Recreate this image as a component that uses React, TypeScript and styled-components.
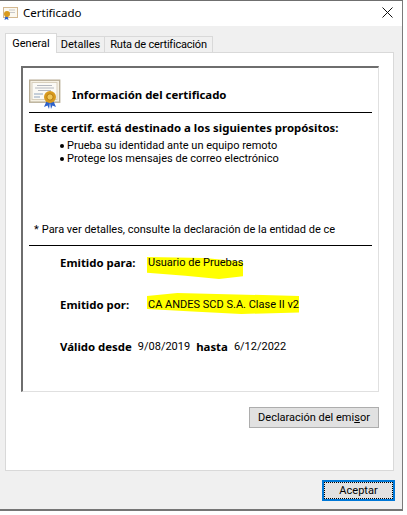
import styled, { createGlobalStyle } from "styled-components";

const GlobalStyle = createGlobalStyle`
  html, body {
    margin: 0;
    padding: 0;
    background: #ffffff;
  }
  body {
    font-family: Roboto, "Noto Sans", sans-serif;
    font-size: 11px;
    color: #000000;
  }
  b {
    font-family: "Noto Sans", sans-serif;
    font-size: 11.4px;
    font-weight: 700;
  }
`;

const Page = styled.div`
  width: 407px;
  height: 515px;
  overflow: hidden;
`;

const Dialog = styled.div`
  width: 402px;
  height: 508px;
  background: #f0f0f0;
  border-top: 1px solid #6f6f6f;
  border-right: 1px solid #7a7a7a;
  border-bottom: 2px solid #757575;
  display: flex;
  flex-direction: column;
`;

const TitleBar = styled.div`
  height: 25px;
  box-sizing: border-box;
  flex: none;
  background: #ffffff;
  display: flex;
  align-items: center;
  padding: 0 9px 2px 3px;
  gap: 5px;
`;

const Title = styled.span`
  font-family: "Noto Sans", sans-serif;
  font-size: 11.5px;
  flex: 1;
`;

const Content = styled.div`
  flex: 1;
  display: flex;
  flex-direction: column;
  padding: 7px 8px 0 5px;
`;

const TabRow = styled.div`
  display: flex;
  align-items: flex-end;
  height: 20px;
  position: relative;
  z-index: 1;
  margin-bottom: -1px;
`;

const Tab = styled.div<{ $active?: boolean; $width: number }>`
  width: ${(p) => p.$width}px;
  height: ${(p) => (p.$active ? 20 : 17)}px;
  box-sizing: border-box;
  background: ${(p) => (p.$active ? "#ffffff" : "#f0f0f0")};
  border: 1px solid #d9d9d9;
  border-bottom: ${(p) => (p.$active ? "none" : "1px solid #d9d9d9")};
  border-left: ${(p) => (p.$active ? "1px solid #d9d9d9" : "none")};
  display: flex;
  align-items: center;
  justify-content: center;
  white-space: nowrap;
  letter-spacing: ${(p) => (p.$width > 100 ? "-0.2px" : "0")};
`;

const Panel = styled.div`
  height: 419px;
  box-sizing: border-box;
  background: #ffffff;
  border: 1px solid #d9d9d9;
  padding: 13px 14px 0 15px;
`;

const Frame = styled.div`
  height: 326px;
  box-sizing: border-box;
  border-top: 2px solid #6e6e6e;
  border-left: 2px solid #6e6e6e;
  border-right: 1px solid #e0e0e0;
  border-bottom: 1px solid #e0e0e0;
  padding: 0 6px 0 6px;
`;

const InfoHeader = styled.div`
  height: 45px;
  box-sizing: border-box;
  border-bottom: 1px solid #000000;
  display: flex;
  align-items: center;
  gap: 11px;
  padding-top: 9px;
`;

const Purposes = styled.div`
  height: 133px;
  box-sizing: border-box;
  border-bottom: 1px solid #000000;
  padding: 8px 0 0 5px;
  display: flex;
  flex-direction: column;
`;

const PurposeTitle = styled.b`
  line-height: 13px;
  margin-bottom: 5px;
`;

const Purpose = styled.div`
  line-height: 13px;
  padding-left: 26px;
  display: flex;
  align-items: center;
  gap: 3px;
`;

const Bullet = styled.span`
  width: 4px;
  height: 4px;
  border-radius: 50%;
  background: #000000;
`;

const Footnote = styled.div`
  margin-top: auto;
  margin-bottom: 9px;
  line-height: 13px;
  white-space: nowrap;
  display: flex;
  gap: 3px;
`;

const Details = styled.div`
  padding: 10px 0 0 31px;
  display: flex;
  flex-direction: column;
  gap: 29px;
`;

const DetailRow = styled.div`
  display: grid;
  grid-template-columns: 88px auto;
  line-height: 13px;
`;

const Marked = styled.span<{ $width: number; $height: number; $top: number; $clip: string }>`
  position: relative;
  z-index: 0;
  justify-self: start;
  white-space: nowrap;

  &::before {
    content: "";
    position: absolute;
    z-index: -1;
    left: -1px;
    top: ${(p) => p.$top}px;
    width: ${(p) => p.$width}px;
    height: ${(p) => p.$height}px;
    background: #ffff00;
    clip-path: polygon(${(p) => p.$clip});
  }
`;

const ValidRow = styled.div`
  display: flex;
  line-height: 13px;
  gap: 6px;
`;

const ButtonRow = styled.div`
  display: flex;
  justify-content: flex-end;
  padding: 15px 0 0 0;
`;

const StatementButton = styled.button`
  width: 130px;
  height: 21px;
  padding: 0;
  background: #e1e1e1;
  border: 1px solid #adadad;
  font: inherit;
  color: #000000;
`;

const Footer = styled.div`
  display: flex;
  justify-content: flex-end;
  padding-top: 9px;
  margin-right: -1px;
`;

const OkButton = styled.button`
  width: 73px;
  height: 21px;
  padding: 0;
  background: #e1e1e1;
  border: 2px solid #0078d7;
  outline: 1px dotted #000000;
  outline-offset: -3px;
  font: inherit;
  color: #000000;
`;

function CertIcon() {
  return (
    <svg width="32" height="32" viewBox="0 0 32 32">
      <rect x="0.7" y="1.2" width="30" height="22" fill="#f6f1e4" stroke="#b9ae97" strokeWidth="1.4" />
      <rect x="3" y="3.5" width="25" height="17" fill="#fbfaf5" stroke="#d8d0bd" />
      <path d="M8 6.5h15M6 9h19M9 11.5h13" stroke="#b4b8bf" strokeWidth="1" />
      <path d="M5 15h9M5 18h6" stroke="#8fa3bd" strokeWidth="1.2" />
      <path d="M18 21l-3 7 3.5-1.5L20 30l1-6z M24 21l3 7-3.5-1.5L22 30l-1-6z" fill="#2f62c9" />
      <circle cx="21" cy="18" r="6" fill="#d89a1e" />
      <circle cx="21" cy="18" r="3.2" fill="#f1c75a" stroke="#b67c10" />
    </svg>
  );
}

function TitleIcon() {
  return (
    <svg width="15" height="16" viewBox="0 0 15 16">
      <rect x="0.5" y="2.5" width="14" height="10" fill="#fbf8f0" stroke="#d3b890" />
      <path d="M6 5h6M6 7.5h6" stroke="#c9c9c9" strokeWidth="1" />
      <path d="M2.5 11l-1 4 2-1 2 1-1-4z" fill="#2f62c9" />
      <circle cx="4" cy="9" r="3" fill="#d89a1e" />
    </svg>
  );
}

function CloseIcon() {
  return (
    <svg width="11" height="11" viewBox="0 0 11 11">
      <path d="M0.5 0.5l10 10M10.5 0.5l-10 10" stroke="#111111" strokeWidth="1" fill="none" />
    </svg>
  );
}

export default function App() {
  return (
    <Page>
      <GlobalStyle />
      <Dialog>
        <TitleBar>
          <TitleIcon />
          <Title>Certificado</Title>
          <CloseIcon />
        </TitleBar>
        <Content>
          <TabRow>
            <Tab $active $width={52}>General</Tab>
            <Tab $width={48}>Detalles</Tab>
            <Tab $width={108}>Ruta de certificación</Tab>
          </TabRow>
          <Panel>
            <Frame>
              <InfoHeader>
                <CertIcon />
                <b>Información del certificado</b>
              </InfoHeader>
              <Purposes>
                <PurposeTitle>Este certif. está destinado a los siguientes propósitos:</PurposeTitle>
                <Purpose><Bullet />Prueba su identidad ante un equipo remoto</Purpose>
                <Purpose><Bullet />Protege los mensajes de correo electrónico</Purpose>
                <Footnote><span>*</span>Para ver detalles, consulte la declaración de la entidad de ce</Footnote>
              </Purposes>
              <Details>
                <DetailRow>
                  <b>Emitido para:</b>
                  <Marked $width={96} $height={22} $top={1} $clip="0 0, 60% 5%, 100% 22%, 100% 88%, 75% 100%, 40% 85%, 0 72%">Usuario de Pruebas</Marked>
                </DetailRow>
                <DetailRow>
                  <b>Emitido por:</b>
                  <Marked $width={152} $height={21} $top={-5} $clip="0 14%, 20% 0, 100% 14%, 100% 93%, 62% 100%, 30% 88%, 0 76%">CA ANDES SCD S.A. Clase II v2</Marked>
                </DetailRow>
                <ValidRow>
                  <b>Válido desde</b>
                  <span>9/08/2019</span>
                  <b>hasta</b>
                  <span>6/12/2022</span>
                </ValidRow>
              </Details>
            </Frame>
            <ButtonRow>
              <StatementButton>Declaración del emi<u>s</u>or</StatementButton>
            </ButtonRow>
          </Panel>
          <Footer>
            <OkButton>Aceptar</OkButton>
          </Footer>
        </Content>
      </Dialog>
    </Page>
  );
}
